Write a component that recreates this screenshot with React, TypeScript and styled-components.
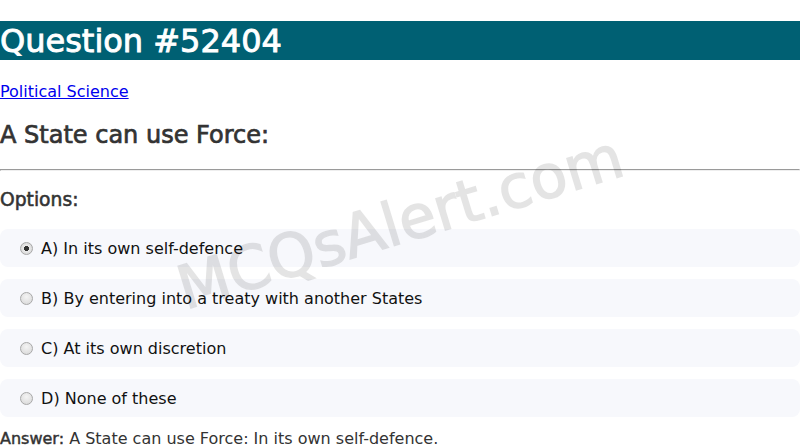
import React from "react";
import styled, { createGlobalStyle } from "styled-components";

const options = [
  "A) In its own self-defence",
  "B) By entering into a treaty with another States",
  "C) At its own discretion",
  "D) None of these",
];

function App() {
  return (
    <>
      <GlobalStyle />
      <Page>
        <Title>Question #52404</Title>
        <Category>
          <a href="#">Political Science</a>
        </Category>
        <QuestionText>A State can use Force:</QuestionText>
        <Divider />
        <OptionsHeading>Options:</OptionsHeading>
        <OptionList>
          {options.map((text, i) => (
            <Option key={text}>
              <Radio type="radio" name="opt" checked={i === 0} readOnly /> {text}
            </Option>
          ))}
        </OptionList>
        <Answer>
          <Strong>Answer:</Strong> A State can use Force: In its own self-defence.
        </Answer>
        <Watermark>MCQsAlert.com</Watermark>
      </Page>
    </>
  );
}

export default App;

const GlobalStyle = createGlobalStyle`
  body {
    margin: 0;
    font-family: "DejaVu Sans", Verdana, sans-serif;
    background: #fff;
  }
`;

// headings use the book face thickened, like a synthetic bold
const Page = styled.div`
  position: relative;
  overflow: hidden;
`;

const Title = styled.h1`
  font-size: 32px;
  font-weight: normal;
  -webkit-text-stroke: 0.9px currentColor;
  margin: 21.44px 0;
  padding-top: 1px;
  background: #006073;
  color: #fff;
`;

const Category = styled.p`
  margin: 16px 0;
  a {
    color: #0000ee;
  }
`;

const QuestionText = styled.h2`
  font-size: 24px;
  font-weight: normal;
  -webkit-text-stroke: 0.7px currentColor;
  margin: 19.92px 0;
  color: #333;
`;

const Divider = styled.hr`
  margin: 8px 0;
`;

const OptionsHeading = styled.h3`
  font-size: 18.72px;
  font-weight: normal;
  -webkit-text-stroke: 0.55px currentColor;
  margin: 18.72px 0;
  color: #333;
`;

const OptionList = styled.div`
  display: flex;
  flex-direction: column;
  gap: 12px;
  margin-top: 1px;
`;

const Option = styled.label`
  display: block;
  padding: 11px 15px 9px;
  line-height: 18px;
  background: #f7f8fc;
  border-radius: 8px;
  color: #111;
`;

const Radio = styled.input`
  appearance: none;
  width: 13px;
  height: 13px;
  margin: 0 3px 0 5px;
  vertical-align: -1px;
  border-radius: 50%;
  border: 1px solid #a8a8a8;
  background: radial-gradient(circle at 50% 35%, #f4f4f4, #d6d6d6);
  box-sizing: border-box;
  &:checked {
    background: radial-gradient(circle, #333 0 2.3px, #eaeaea 2.8px, #cfcfcf 100%);
  }
`;

const Answer = styled.p`
  margin: 12px 0 0;
  color: #333;
`;

const Strong = styled.span`
  -webkit-text-stroke: 0.45px currentColor;
`;

const Watermark = styled.div`
  position: absolute;
  left: 50%;
  top: 222px;
  transform: translate(-50%, -50%) rotate(-17deg);
  font-size: 60px;
  -webkit-text-stroke: 1.4px currentColor;
  color: #000;
  opacity: 0.1;
  white-space: nowrap;
  pointer-events: none;
`;
